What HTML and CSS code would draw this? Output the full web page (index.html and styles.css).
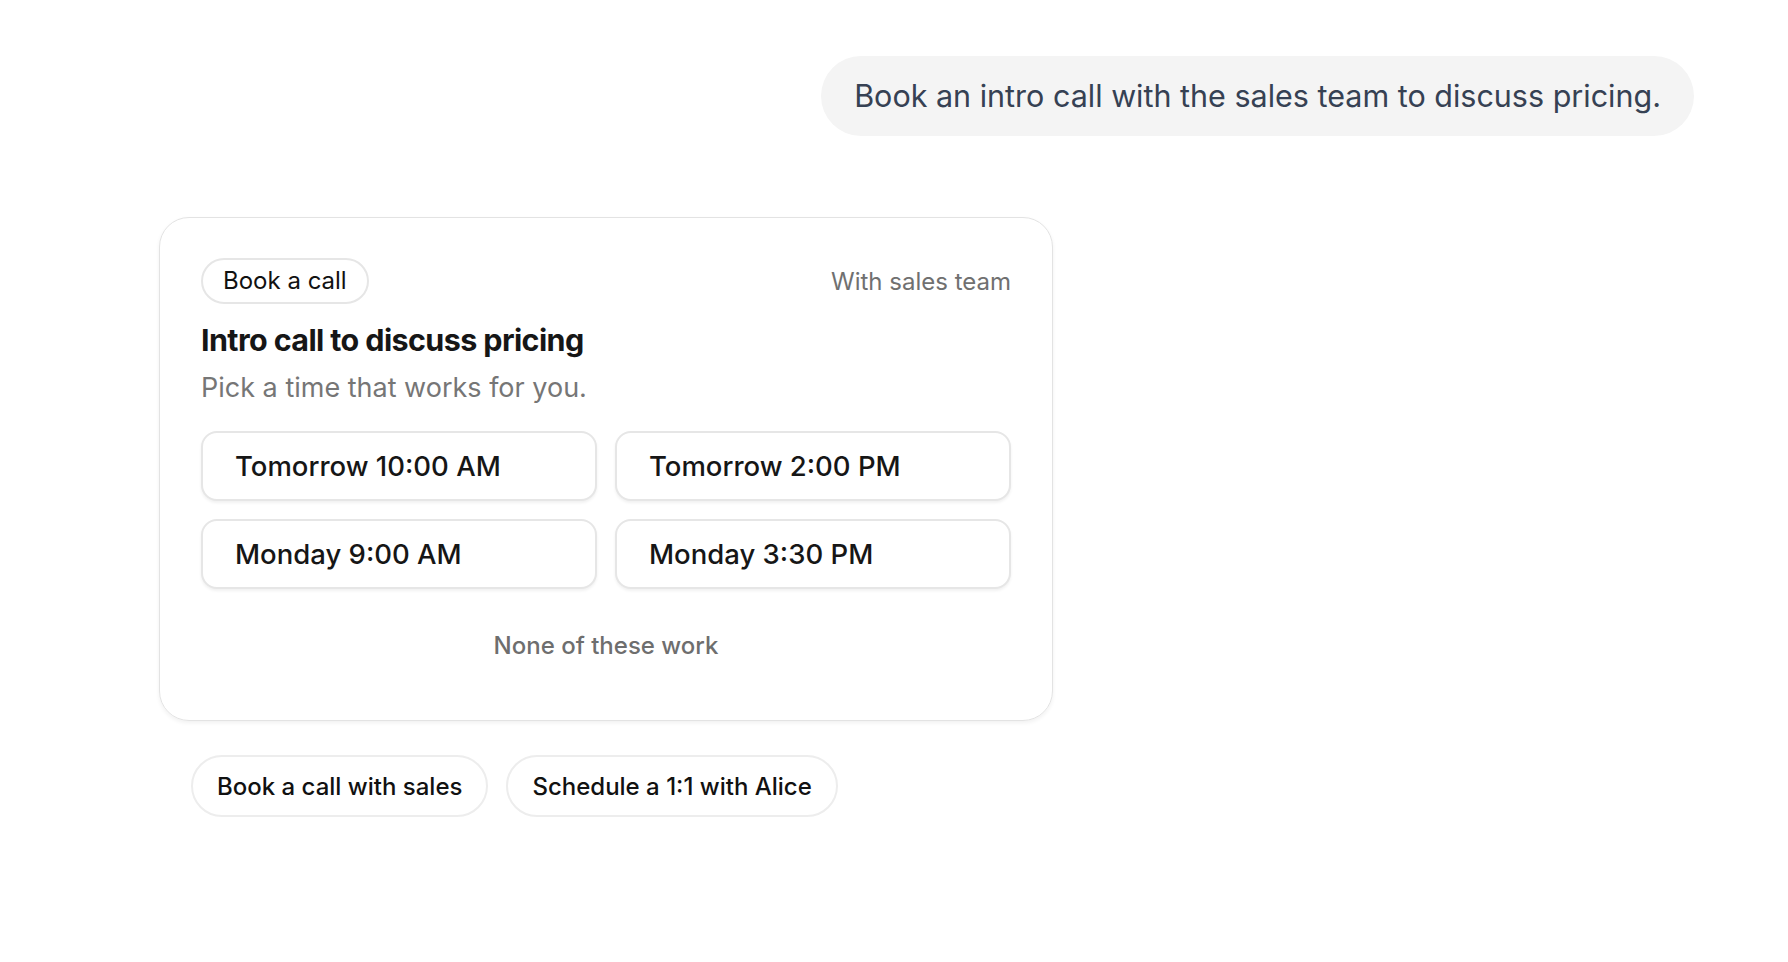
FILE: index.html
```html
<!DOCTYPE html>
<html>
<head>
    <title>Chat</title>
    <meta name="viewport" content="width=device-width, initial-scale=1" charset="UTF-8">
    <link rel="stylesheet" href="styles.css">
</head>
<body>
<section class="chat">
    <div class="msg-user">
        <div class="bubble">Book an intro call with the sales team to discuss pricing.</div>
    </div>

    <div class="card">
        <div class="card-top">
            <span class="tag">Book a call</span>
            <span class="with">With sales team</span>
        </div>
        <h2 class="card-title">Intro call to discuss pricing</h2>
        <p class="card-sub">Pick a time that works for you.</p>
        <div class="slots">
            <button class="slot">Tomorrow 10:00 AM</button>
            <button class="slot">Tomorrow 2:00 PM</button>
            <button class="slot">Monday 9:00 AM</button>
            <button class="slot">Monday 3:30 PM</button>
        </div>
        <button class="none-btn">None of these work</button>
    </div>

    <div class="chips">
        <button class="chip">Book a call with sales</button>
        <button class="chip">Schedule a 1:1 with Alice</button>
    </div>
</section>
</body>
</html>
```

FILE: styles.css
```css
body {
    margin: 0;
    background: #fff;
    font-family: Inter, "Noto Sans", sans-serif;
    color: #111;
}

.chat {
    display: flex;
    flex-direction: column;
    padding: 56px 94px 0 159px;
}

/* user message, right side */
.msg-user {
    display: flex;
    justify-content: flex-end;
}

.bubble {
    background: #f4f4f4;
    color: #364153;
    font-size: 30.5px;
    line-height: 80px;
    height: 80px;
    padding: 0 33px;
    border-radius: 40px;
}

/* booking card */
.card {
    margin-top: 81px;
    width: 894px;
    box-sizing: border-box;
    border: 1px solid #e3e3e3;
    border-radius: 30px;
    padding: 40px 41px 60px;
    box-shadow: 0 2px 4px rgba(0, 0, 0, 0.06);
}

.card-top {
    display: flex;
    justify-content: space-between;
    align-items: center;
}

.tag {
    border: 2px solid #e6e6e6;
    border-radius: 23px;
    height: 42px;
    line-height: 42px;
    padding: 0 20px;
    font-size: 24px;
    color: #111;
}

.with {
    font-size: 24px;
    color: #707070;
}

.card-title {
    margin: 17px 0 0;
    font-size: 30.5px;
    line-height: 37px;
    font-weight: 700;
    letter-spacing: -0.02em;
    color: #161616;
}

.card-sub {
    margin: 13px 0 0;
    font-size: 27px;
    line-height: 33px;
    color: #767676;
}

.slots {
    margin-top: 27px;
    display: grid;
    grid-template-columns: 1fr 1fr;
    gap: 18px;
}

.slot {
    height: 70px;
    text-align: left;
    padding: 0 32px;
    background: #fff;
    border: 2px solid #e6e6e6;
    border-radius: 16px;
    box-shadow: 0 2px 3px rgba(0, 0, 0, 0.06);
    font-family: inherit;
    font-size: 27.5px;
    font-weight: 500;
    color: #161616;
}

.none-btn {
    display: block;
    margin: 42px auto 0;
    padding: 0;
    line-height: 29px;
    background: none;
    border: none;
    font-family: inherit;
    font-size: 24px;
    font-weight: 500;
    color: #6e6e6e;
}

/* follow-up suggestions */
.chips {
    display: flex;
    gap: 18px;
    margin: 34px 0 0 32px;
}

.chip {
    height: 62px;
    padding: 0 24px;
    background: #fff;
    border: 2px solid #ededed;
    border-radius: 31px;
    font-family: inherit;
    font-size: 24px;
    font-weight: 500;
    color: #111;
}
```
